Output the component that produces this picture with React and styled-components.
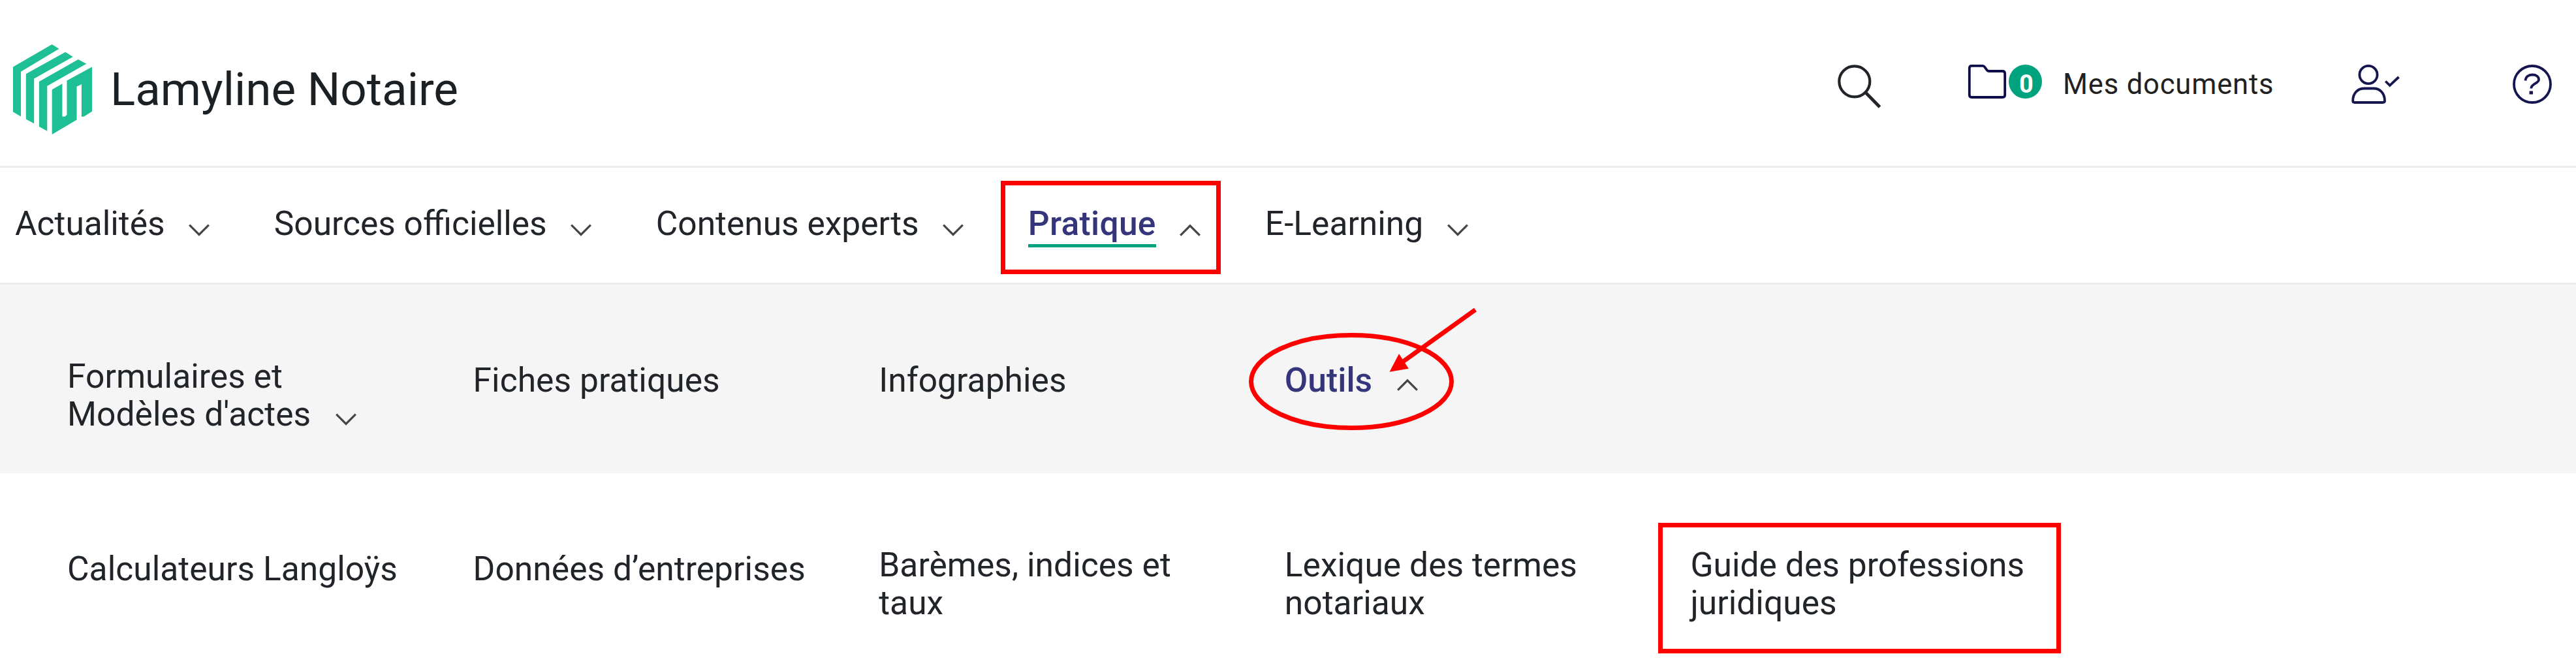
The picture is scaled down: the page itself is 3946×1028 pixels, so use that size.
import React from 'react';
import styled, { createGlobalStyle } from 'styled-components';

const GlobalStyle = createGlobalStyle`
    body {
        margin: 0;
        background: #fff;
        font-family: Roboto, 'Liberation Sans', sans-serif;
        color: #212529;
    }
    svg {
        display: block;
        flex: none;
        overflow: visible;
    }
`;

const Page = styled.div`
    height: 1028px;
    overflow: hidden;
`;

const Header = styled.header`
    display: flex;
    justify-content: space-between;
    align-items: flex-start;
    box-sizing: border-box;
    height: 257px;
    padding: 68px 37px 0 20px;
    border-bottom: 3px solid #ececec;
`;

const Brand = styled.div`
    display: flex;
    align-items: center;
    gap: 28px;
    font-size: 71px;
    line-height: 138px;
    white-space: nowrap;
    color: #1b2024;
`;

const Actions = styled.div`
    display: flex;
    align-items: flex-start;
    padding-top: 31px;
`;

const Documents = styled.div`
    display: flex;
    align-items: flex-start;
    margin: 0 118px 0 133px;
`;

const Badge = styled.span`
    display: flex;
    align-items: center;
    justify-content: center;
    box-sizing: border-box;
    width: 51px;
    height: 52px;
    margin: 0 32px 0 4px;
    padding: 8px 0 0 3px;
    border-radius: 50%;
    background: #00a37d;
    color: #fff;
    font-size: 38px;
    font-weight: 700;
`;

const DocumentsLabel = styled.span`
    width: 324px;
    margin-top: 5px;
    font-size: 43.5px;
    line-height: 51px;
    letter-spacing: 0.85px;
    white-space: nowrap;
    color: #212121;
`;

const UserSlot = styled.div`
    margin-right: 173px;
`;

const Nav = styled.nav`
    display: flex;
    align-items: flex-start;
    gap: 98.6px;
    box-sizing: border-box;
    height: 179px;
    padding: 56px 0 0 23px;
    border-bottom: 3px solid #ececec;
`;

const NavItem = styled.div`
    position: relative;
    display: flex;
    align-items: flex-start;
    gap: 36.5px;
`;

const NavLabel = styled.span`
    font-size: 51.5px;
    line-height: 60px;
    white-space: nowrap;
    ${({ $active }) => $active && `
        padding-bottom: 1px;
        border-bottom: 5px solid #00a37d;
        color: #35357c;
        font-weight: 500;
        letter-spacing: 0.3px;
    `}
`;

const NavChevron = styled.span`
    margin-top: 30px;
`;

const MenuRow = styled.div`
    display: grid;
    grid-template-columns: repeat(5, 621.6px);
    align-items: start;
    box-sizing: border-box;
    height: ${({ $height }) => $height}px;
    padding: 112px 0 0 103px;
    background: ${({ $shaded }) => ($shaded ? '#f5f5f5' : '#fff')};
`;

const MenuItem = styled.div`
    position: relative;
    display: flex;
    align-items: flex-end;
    gap: 38px;
    justify-self: start;
    margin-top: ${({ $single }) => ($single ? 6 : 0)}px;
`;

const MenuLabel = styled.span`
    font-size: 51.5px;
    line-height: 58.4px;
    letter-spacing: 0.05px;
    white-space: pre-line;
    ${({ $active }) => $active && `
        color: #35357c;
        font-weight: 500;
    `}
`;

const MenuChevron = styled.span`
    margin-bottom: 13px;
`;

const Frame = styled.span`
    position: absolute;
    top: ${({ $top }) => $top}px;
    left: ${({ $left }) => $left}px;
    box-sizing: border-box;
    width: ${({ $width }) => $width}px;
    height: ${({ $height }) => $height}px;
    border: 7px solid #f00;
`;

const Pointer = styled.svg`
    position: absolute;
    top: -85px;
    left: -68px;
`;

const NAV = [
    { label: 'Actualités' },
    { label: 'Sources officielles' },
    { label: 'Contenus experts' },
    { label: 'Pratique', active: true },
    { label: 'E-Learning' },
];

const PRATIQUE = [
    { label: "Formulaires et\nModèles d'actes", chevron: true },
    { label: 'Fiches pratiques', single: true },
    { label: 'Infographies', single: true },
    { label: 'Outils', single: true, chevron: true, active: true },
];

const OUTILS = [
    { label: 'Calculateurs Langloÿs', single: true },
    { label: 'Données d’entreprises', single: true },
    { label: 'Barèmes, indices et\ntaux' },
    { label: 'Lexique des termes\nnotariaux' },
    { label: 'Guide des professions\njuridiques', framed: true },
];

function Logo() {
    return (
        <svg width="121" height="138" viewBox="62 55 361 412" preserveAspectRatio="none" fill="#1fbf95">
            <path d="M62 158 240 55 272 75 98 180V385L62 364Z" />
            <path d="M121 190 301 90 336 112 158 212V417L121 397Z" />
            <path d="M181 225 360 124 397 144 218 245V451L181 431Z" />
            <path d="M240 262 287 235V385H300L308 377V221L423 158V362L385 386H375V237L353 248V400L240 467Z" />
        </svg>
    );
}

function SearchIcon() {
    return (
        <svg width="67" height="67" viewBox="0 0 67 67" fill="none" stroke="#212529" strokeWidth="4.2">
            <circle cx="25.8" cy="25.8" r="23.5" />
            <path d="M42.5 42.5 64.5 65" strokeWidth="4.8" />
        </svg>
    );
}

function FolderIcon() {
    return (
        <svg width="58" height="52" viewBox="0 0 58 52" fill="none" stroke="#0d0d4b" strokeWidth="3.8" strokeLinejoin="round">
            <path d="M5 1.8H22Q24 1.8 25.2 3.6L29 8.8Q30 10 32 10H52.5Q56.2 10 56.2 14V46.5Q56.2 50 52.5 50H5.5Q1.8 50 1.8 46.5V5.5Q1.8 1.8 5 1.8Z" />
        </svg>
    );
}

function UserIcon() {
    return (
        <svg width="74" height="60" viewBox="0 0 74 60" fill="none" stroke="#15154f" strokeWidth="3.8">
            <circle cx="26" cy="15.5" r="13.6" />
            <path d="M5 58H48Q51 58 51 55.5C51 43 43 36.5 34 36.5H20C10 36.5 2.2 43 2.2 55.5Q2.2 58 5 58Z" />
            <path d="M52.2 25.5 58.8 31.8 72.5 19" />
        </svg>
    );
}

function HelpIcon() {
    return (
        <svg width="60" height="60" viewBox="0 0 60 60" fill="none" stroke="#15154f" strokeWidth="3.8">
            <circle cx="30" cy="30" r="28" />
            <path d="M19.5 24.5C20 18.5 24.5 15.5 30 15.5C36 15.5 40 18.5 40 23C40 29 28.3 29 28.3 36.5" />
            <path d="M28.3 40.5V45.5" strokeWidth="5.5" />
        </svg>
    );
}

function Chevron({ up }) {
    return (
        <svg width="32" height="19" viewBox="0 0 32 19" fill="none" stroke="#454545" strokeWidth="3.2">
            <path d={up ? 'M1.2 17.6 16 2.8 30.8 17.6' : 'M1.2 1.6 16 16.4 30.8 1.6'} />
        </svg>
    );
}

function CircledArrow() {
    return (
        <Pointer width="380" height="200" viewBox="0 0 380 200">
            <ellipse cx="170" cy="115.5" rx="153.5" ry="71" fill="none" stroke="#f00" strokeWidth="7" />
            <path d="M360 5.5 245 88" stroke="#f00" strokeWidth="7" />
            <path d="M228.5 100.7 243 73 257.8 95.7Z" fill="#f00" />
        </Pointer>
    );
}

function Menu({ items, height, shaded }) {
    return (
        <MenuRow $height={height} $shaded={shaded}>
            {items.map((item) => (
                <MenuItem key={item.label} $single={item.single}>
                    <MenuLabel $active={item.active}>{item.label}</MenuLabel>
                    {item.chevron && (
                        <MenuChevron>
                            <Chevron up={item.active} />
                        </MenuChevron>
                    )}
                    {item.active && <CircledArrow />}
                    {item.framed && <Frame $top={-36} $left={-49} $width={617} $height={200} />}
                </MenuItem>
            ))}
        </MenuRow>
    );
}

function App() {
    return (
        <Page>
            <GlobalStyle />
            <Header>
                <Brand>
                    <Logo />
                    Lamyline Notaire
                </Brand>
                <Actions>
                    <SearchIcon />
                    <Documents>
                        <FolderIcon />
                        <Badge>0</Badge>
                        <DocumentsLabel>Mes documents</DocumentsLabel>
                    </Documents>
                    <UserSlot>
                        <UserIcon />
                    </UserSlot>
                    <HelpIcon />
                </Actions>
            </Header>
            <Nav>
                {NAV.map(({ label, active }) => (
                    <NavItem key={label}>
                        <NavLabel $active={active}>{label}</NavLabel>
                        <NavChevron>
                            <Chevron up={active} />
                        </NavChevron>
                        {active && <Frame $top={-36} $left={-42} $width={337} $height={143} />}
                    </NavItem>
                ))}
            </Nav>
            <Menu items={PRATIQUE} height={289} shaded />
            <Menu items={OUTILS} height={303} />
        </Page>
    );
}

export default App;
